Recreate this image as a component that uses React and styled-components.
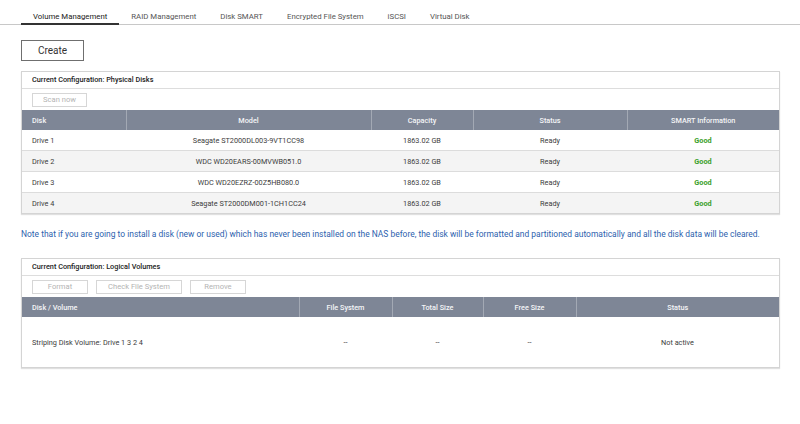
import React from 'react';
import styled, { createGlobalStyle } from 'styled-components';

const GlobalStyle = createGlobalStyle`
  body {
    margin: 0;
    background: #ffffff;
    font-family: Roboto, "Liberation Sans", sans-serif;
    color: #333333;
  }
`;

const Page = styled.div`
  width: 800px;
  height: 424px;
  overflow: hidden;
`;

const TabBar = styled.div`
  display: flex;
  padding: 11px 0 0 21px;
  border-bottom: 1px solid #c8c8c8;
  height: 13px;
`;

const Tab = styled.div`
  padding: 0 12px;
  font-size: 7.8px;
  line-height: 12px;
  color: ${(p) => (p.active ? '#222222' : '#555555')};
  border-bottom: 2px solid ${(p) => (p.active ? '#333333' : 'transparent')};
  margin-bottom: -1px;
  white-space: nowrap;
  box-sizing: border-box;
  height: 14px;
`;

const Content = styled.div`
  padding: 14px 20px 0 21px;
`;

const CreateButton = styled.button`
  width: 63px;
  height: 21px;
  background: #ffffff;
  border: 1px solid #6f6f6f;
  font-family: inherit;
  font-size: 10px;
  color: #333333;
  padding: 0;
`;

const Panel = styled.div`
  margin-top: ${(p) => p.top}px;
  border: 1px solid #d4d4d4;
  box-shadow: 0 1px 1px rgba(0, 0, 0, 0.12);
`;

const PanelTitle = styled.div`
  height: 16px;
  line-height: 16px;
  padding-left: 10px;
  font-size: 7.3px;
  font-weight: 500;
  color: #222222;
  border-bottom: 1px solid #dddddd;
`;

const Toolbar = styled.div`
  display: flex;
  gap: 8px;
  align-items: center;
  height: 21px;
  padding-left: 10px;
`;

const ToolButton = styled.button`
  width: ${(p) => p.w}px;
  height: 14px;
  background: #ffffff;
  border: 1px solid #d6d6d6;
  color: #b4b4b4;
  font-family: inherit;
  font-size: 7.6px;
  padding: 0;
`;

const Table = styled.table`
  width: 100%;
  border-collapse: collapse;
  table-layout: fixed;
  font-size: 7.3px;
`;

const Th = styled.th`
  height: 20px;
  padding: 0 0 0 ${(p) => (p.left ? '10px' : '0')};
  background: #7e8696;
  color: #f4f5f7;
  font-weight: 500;
  text-align: ${(p) => (p.left ? 'left' : 'center')};
  border-left: ${(p) => (p.first ? 'none' : '1px solid #a3a9b4')};
`;

const Tr = styled.tr`
  background: ${(p) => (p.alt ? '#f4f4f4' : '#ffffff')};
  border-top: ${(p) => (p.first ? 'none' : '1px solid #dcdcdc')};
`;

const Td = styled.td`
  height: ${(p) => p.h || 20}px;
  padding: 0 0 0 ${(p) => (p.left ? '10px' : '0')};
  text-align: ${(p) => (p.left ? 'left' : 'center')};
  color: ${(p) => (p.good ? '#3aa02a' : '#3c3c3c')};
  font-weight: ${(p) => (p.good ? 700 : 400)};
`;

const Note = styled.p`
  margin: 15px 0 0 0;
  font-size: 8.45px;
  color: #2d5fae;
  white-space: nowrap;
`;

const tabs = [
  'Volume Management',
  'RAID Management',
  'Disk SMART',
  'Encrypted File System',
  'iSCSI',
  'Virtual Disk',
];

const disks = [
  ['Drive 1', 'Seagate ST2000DL003-9VT1CC98'],
  ['Drive 2', 'WDC WD20EARS-00MVWB051.0'],
  ['Drive 3', 'WDC WD20EZRZ-00Z5HB080.0'],
  ['Drive 4', 'Seagate ST2000DM001-1CH1CC24'],
];

const App = () => (
  <Page>
    <GlobalStyle />
    <TabBar>
      {tabs.map((t, i) => (
        <Tab key={t} active={i === 0}>{t}</Tab>
      ))}
    </TabBar>
    <Content>
      <CreateButton>Create</CreateButton>

      <Panel top={10}>
        <PanelTitle>Current Configuration: Physical Disks</PanelTitle>
        <Toolbar>
          <ToolButton w={55}>Scan now</ToolButton>
        </Toolbar>
        <Table>
          <colgroup>
            <col style={{ width: 104 }} />
            <col style={{ width: 245 }} />
            <col style={{ width: 102 }} />
            <col style={{ width: 154 }} />
            <col />
          </colgroup>
          <thead>
            <tr>
              <Th first left>Disk</Th>
              <Th>Model</Th>
              <Th>Capacity</Th>
              <Th>Status</Th>
              <Th>SMART Information</Th>
            </tr>
          </thead>
          <tbody>
            {disks.map(([d, m], i) => (
              <Tr key={d} alt={i % 2 === 1} first={i === 0}>
                <Td left>{d}</Td>
                <Td>{m}</Td>
                <Td>1863.02 GB</Td>
                <Td>Ready</Td>
                <Td good>Good</Td>
              </Tr>
            ))}
          </tbody>
        </Table>
      </Panel>

      <Note>
        Note that if you are going to install a disk (new or used) which has never been installed on the NAS before, the disk will be formatted and partitioned automatically and all the disk data will be cleared.
      </Note>

      <Panel top={19}>
        <PanelTitle>Current Configuration: Logical Volumes</PanelTitle>
        <Toolbar>
          <ToolButton w={56}>Format</ToolButton>
          <ToolButton w={86}>Check File System</ToolButton>
          <ToolButton w={56}>Remove</ToolButton>
        </Toolbar>
        <Table>
          <colgroup>
            <col style={{ width: 277 }} />
            <col style={{ width: 93 }} />
            <col style={{ width: 91 }} />
            <col style={{ width: 93 }} />
            <col />
          </colgroup>
          <thead>
            <tr>
              <Th first left>Disk / Volume</Th>
              <Th>File System</Th>
              <Th>Total Size</Th>
              <Th>Free Size</Th>
              <Th>Status</Th>
            </tr>
          </thead>
          <tbody>
            <Tr first>
              <Td left h={50}>Striping Disk Volume: Drive 1 3 2 4</Td>
              <Td h={50}>--</Td>
              <Td h={50}>--</Td>
              <Td h={50}>--</Td>
              <Td h={50}>Not active</Td>
            </Tr>
          </tbody>
        </Table>
      </Panel>
    </Content>
  </Page>
);

export default App;
